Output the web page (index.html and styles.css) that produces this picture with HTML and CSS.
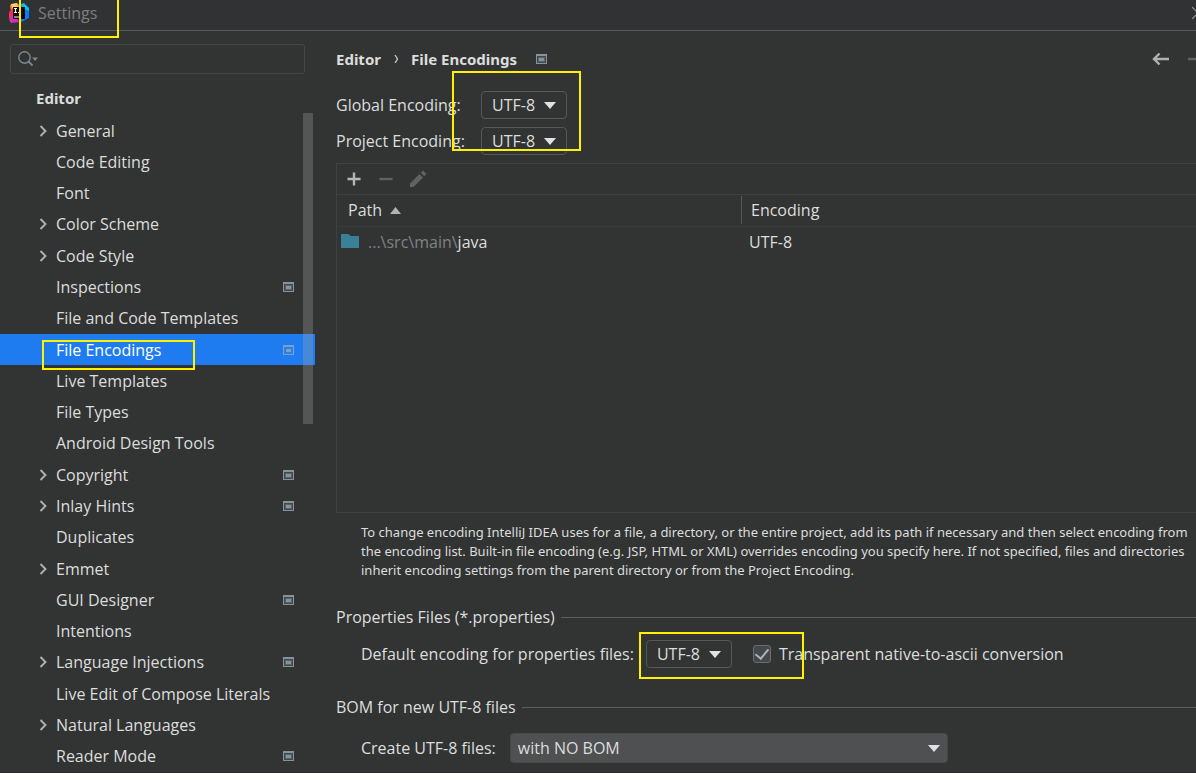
FILE: index.html
```
<!DOCTYPE html>
<html lang="en">
<head>
<meta charset="utf-8">
<title>Settings</title>
<link rel="stylesheet" href="styles.css">
</head>
<body>
<svg class="defs" aria-hidden="true">
  <symbol id="chevron" viewBox="0 0 10 14"><path d="M2.500 2l5 5-5 5" fill="none" stroke="#afb1b3" stroke-width="1.9"/></symbol>
  <symbol id="scope" viewBox="0 0 11 10"><path fill="#87939a" d="M0 0h11v10H0z"/><path fill="#41474a" d="M1 2h9v7H1z"/><path fill="#59626a" d="M2 3h7v5H2z"/><path fill="#87939a" d="M3 4h5v3H3z"/></symbol>
  <symbol id="scope-selected" viewBox="0 0 11 10"><path fill="#7ba0cc" d="M0 0h11v10H0z"/><path fill="#2f7fe0" d="M1 2h9v7H1z"/><path fill="#7ba0cc" d="M3 4h5v3H3z"/></symbol>
  <symbol id="down" viewBox="0 0 12 7"><path fill="#dfe1e5" d="M0 0h12L6 7z"/></symbol>
</svg>
<header class="titlebar">
  <svg class="logo" viewBox="0 0 20 20">
    <path fill="#fc801d" d="M1 2l7-2 5 5-7 13-5 1-1-8 2-2z"/>
    <path fill="#fe2857" d="M0 9l5-4 5 8-4 6-5-1z"/>
    <path fill="#f9d06b" d="M2 1l6-1 1 4-6 1z"/>
    <path fill="#d829c9" d="M1 13l5-2 4 8-8 1z"/>
    <path fill="#087cfa" d="M10 5l5-4 5 5v9l-8 4-2-1z"/>
    <path fill="#07c3f2" d="M12 1l3-1 5 5v3l-7-3z"/>
    <path fill="#120609" d="M4 4h12v12H4z"/>
    <path fill="none" stroke="#fff" stroke-width="1.200" d="M5 5.500h3M6.500 5.500v4M5 9.500h3M9 9.500h1M5 14h5"/>
  </svg>
  <span class="title">Settings</span>
  <button class="close" aria-label="Close"><svg viewBox="0 0 12 12"><path d="M0 0l12 12M12 0L0 12" stroke="#9a9c9e" stroke-width="1.2"/></svg></button>
  <i class="mark mark-title"></i>
</header>
<div class="body">
  <aside class="sidebar">
    <div class="search">
      <svg viewBox="0 0 20 16"><circle cx="6.500" cy="6.500" r="5.700" fill="none" stroke="#7b8791" stroke-width="1.400"/><path d="M10.500 10.500l4 4" stroke="#7b8791" stroke-width="1.800"/><path d="M14 6.500h6l-3 3.500z" fill="#7b8791"/></svg>
      <input type="text" aria-label="Search settings">
    </div>
    <h2 class="group">Editor</h2>
    <ul class="tree">
      <li class="node"><svg class="chev"><use href="#chevron"/></svg><span>General</span></li>
      <li class="node"><span>Code Editing</span></li>
      <li class="node"><span>Font</span></li>
      <li class="node"><svg class="chev"><use href="#chevron"/></svg><span>Color Scheme</span></li>
      <li class="node"><svg class="chev"><use href="#chevron"/></svg><span>Code Style</span></li>
      <li class="node"><span>Inspections</span><svg class="scope"><use href="#scope"/></svg></li>
      <li class="node"><span>File and Code Templates</span></li>
      <li class="node selected"><span>File Encodings</span><svg class="scope"><use href="#scope-selected"/></svg><i class="mark mark-node"></i></li>
      <li class="node"><span>Live Templates</span></li>
      <li class="node"><span>File Types</span></li>
      <li class="node"><span>Android Design Tools</span></li>
      <li class="node"><svg class="chev"><use href="#chevron"/></svg><span>Copyright</span><svg class="scope"><use href="#scope"/></svg></li>
      <li class="node"><svg class="chev"><use href="#chevron"/></svg><span>Inlay Hints</span><svg class="scope"><use href="#scope"/></svg></li>
      <li class="node"><span>Duplicates</span></li>
      <li class="node"><svg class="chev"><use href="#chevron"/></svg><span>Emmet</span></li>
      <li class="node"><span>GUI Designer</span><svg class="scope"><use href="#scope"/></svg></li>
      <li class="node"><span>Intentions</span></li>
      <li class="node"><svg class="chev"><use href="#chevron"/></svg><span>Language Injections</span><svg class="scope"><use href="#scope"/></svg></li>
      <li class="node"><span>Live Edit of Compose Literals</span></li>
      <li class="node"><svg class="chev"><use href="#chevron"/></svg><span>Natural Languages</span></li>
      <li class="node"><span>Reader Mode</span><svg class="scope"><use href="#scope"/></svg></li>
    </ul>
    <div class="scrollbar"></div>
  </aside>
  <main class="main">
    <div class="crumbs">
      <b>Editor</b><svg class="sep" viewBox="0 0 5 8"><path d="M1 0l2.500 4L1 8" fill="none" stroke="#c8cacc" stroke-width="1.300"/></svg><b>File Encodings</b>
      <svg class="scope"><use href="#scope"/></svg>
      <nav class="history">
        <button aria-label="Back"><svg viewBox="0 0 18 14"><path d="M17 7H2M7.500 1.500L2 7l5.500 5.500" fill="none" stroke="#afb1b3" stroke-width="2.400"/></svg></button>
        <button aria-label="Forward"><svg viewBox="0 0 18 14"><path d="M1 7h15M10.500 1.500L16 7l-5.500 5.500" fill="none" stroke="#5f6162" stroke-width="2.400"/></svg></button>
      </nav>
    </div>
    <div class="encodings">
      <label for="global">Global Encoding:</label>
      <div class="combo"><select id="global"><option>UTF-8</option></select><svg><use href="#down"/></svg></div>
      <label for="project">Project Encoding:</label>
      <div class="combo"><select id="project"><option>UTF-8</option></select><svg><use href="#down"/></svg></div>
      <i class="mark mark-encodings"></i>
    </div>
    <section class="paths">
      <div class="toolbar">
        <button aria-label="Add"><svg viewBox="0 0 18 18"><path d="M9 2.500v13M2.500 9h13" stroke="#b4b6b8" stroke-width="2.400"/></svg></button>
        <button aria-label="Remove"><svg viewBox="0 0 18 18"><path d="M2.500 9h13" stroke="#5f6162" stroke-width="2.400"/></svg></button>
        <button aria-label="Edit"><svg viewBox="0 0 18 18"><path d="M1 13.500L10.500 4l3.500 3.500L4.500 17H1zM11.800 2.800L14 .5 17.500 4l-2.300 2.300z" fill="#5f6162"/></svg></button>
      </div>
      <table>
        <thead><tr><th>Path <svg class="sort" viewBox="0 0 11 7"><path d="M0 7h11L5.500 0z" fill="#afb1b3"/></svg></th><th><span class="col">Encoding</span></th></tr></thead>
        <tbody><tr><td><svg class="folder" viewBox="0 0 18 15"><path d="M0 0h7l3 2h8v12H0z" fill="#3b8099"/></svg><span class="dim">...\src\main\</span>java</td><td>UTF-8</td></tr></tbody>
      </table>
    </section>
    <p class="hint">To change encoding IntelliJ IDEA uses for a file, a directory, or the entire project, add its path if necessary and then select encoding from<br>the encoding list. Built-in file encoding (e.g. JSP, HTML or XML) overrides encoding you specify here. If not specified, files and directories<br>inherit encoding settings from the parent directory or from the Project Encoding.</p>
    <h3 class="section">Properties Files (*.properties)</h3>
    <div class="row row-properties">
      <label for="props">Default encoding for properties files:</label>
      <div class="combo"><select id="props"><option>UTF-8</option></select><svg><use href="#down"/></svg><i class="mark mark-props"></i></div>
      <label class="check"><input type="checkbox" checked>Transparent native-to-ascii conversion</label>
    </div>
    <h3 class="section">BOM for new UTF-8 files</h3>
    <div class="row row-bom">
      <label for="bom">Create UTF-8 files:</label>
      <div class="combo wide"><select id="bom"><option>with NO BOM</option></select><svg><use href="#down"/></svg></div>
    </div>
  </main>
</div>
</body>
</html>
```
FILE: styles.css
```
* { box-sizing: border-box; }
body {
  margin: 0;
  min-height: 100vh;
  display: flex;
  flex-direction: column;
  overflow: hidden;
  background: #323433;
  color: #dcdddd;
  font: 16px/20px "Open Sans", "Noto Sans", sans-serif;
  border-bottom: 1px solid #2b292b;
}
button { padding: 0; border: 0; background: none; display: flex; }
h2, h3, p, ul { margin: 0; padding: 0; }
.defs { position: absolute; width: 0; height: 0; }
.mark { position: absolute; border: 2px solid #fff200; pointer-events: none; z-index: 2; }

.titlebar {
  position: relative;
  display: flex;
  align-items: center;
  height: 31px;
  padding: 0 0 4px 9px;
  background: #313234;
  border-bottom: 1px solid #58595a;
}
.logo { width: 20px; height: 20px; }
.title { margin-left: 9px; color: #7d7e7f; }
.close { margin: 0 -8px 0 auto; }
.close svg { width: 12px; height: 12px; }
.mark-title { left: 19px; top: -4px; width: 100px; height: 42px; }

.body { flex: 1; display: flex; }
.sidebar { position: relative; flex: none; width: 315px; display: flex; flex-direction: column; padding-top: 13px; }
.search {
  display: flex;
  align-items: center;
  height: 30px;
  margin: 0 10px;
  padding-left: 7px;
  border: 1px solid #434546;
  border-radius: 3px;
}
.search svg { width: 20px; height: 16px; }
.search input { flex: 1; min-width: 0; border: 0; outline: 0; background: none; color: inherit; font: inherit; }
.group { margin: 14px 0 7px 36px; font: bold 15px/20px "Noto Sans", sans-serif; }
.tree { flex: 1; display: grid; grid-auto-rows: minmax(31px, 1fr); list-style: none; }
.node { position: relative; display: flex; align-items: center; padding: 0 21px 0 56px; }
.chev { width: 10px; height: 14px; margin: 0 8px 0 -18px; }
.scope { width: 11px; height: 10px; }
.node .scope { margin-left: auto; }
.selected { background: #1f7cf0; color: #fff; }
.mark-node { left: 42px; top: 6px; width: 153px; height: 30px; }
.scrollbar { position: absolute; top: 82px; right: 2px; width: 10px; height: 311px; background: #a6a6a64d; }

.main { flex: 1; min-width: 0; display: flex; flex-direction: column; padding: 17px 0 9px 21px; }
.crumbs { display: flex; align-items: center; height: 22px; font: 15px/20px "Noto Sans", sans-serif; }
.sep { width: 5px; height: 8px; margin: 0 12px 0 13px; }
.crumbs .scope { margin-left: 19px; }
.history { display: flex; gap: 17px; margin: 0 -9px 0 auto; }
.history svg { width: 18px; height: 14px; }

.encodings {
  position: relative;
  display: grid;
  grid-template-columns: 145px auto;
  justify-content: start;
  align-items: center;
  row-gap: 8px;
  margin-top: 21px;
}
.mark-encodings { left: 116px; top: -20px; width: 129px; height: 80px; }
.combo { position: relative; width: 86px; }
.combo select {
  appearance: none;
  display: block;
  width: 100%;
  height: 28px;
  padding: 0 10px;
  border: 1px solid #55585a;
  border-radius: 4px;
  background: #323433;
  color: inherit;
  font: inherit;
}
.combo > svg { position: absolute; right: 11px; top: 11px; width: 12px; height: 7px; pointer-events: none; }
.combo.wide { width: 438px; }
.combo.wide select { height: 30px; padding: 0 7px; background: #4e5052; border-color: #464849; }
.combo.wide > svg { right: 8px; top: 12px; }

.paths { flex: 1; margin-top: 8px; border: 1px solid #3e4041; border-right: 0; }
.toolbar { display: flex; align-items: center; gap: 14px; height: 31px; padding-left: 8px; border-bottom: 1px solid #3c3e3f; }
.toolbar svg { width: 18px; height: 18px; }
table { width: 100%; border-collapse: collapse; table-layout: fixed; }
th, td { height: 31px; padding: 0; text-align: left; font-weight: 400; }
th { border-bottom: 1px solid #383a3b; }
th:first-child { width: 404px; padding-left: 11px; }
.col { display: block; padding: 4px 0 4px 9px; border-left: 1px solid #55585a; }
.sort { width: 11px; height: 7px; margin: 0 0 2px 4px; }
td { padding-left: 4px; }
td + td { padding-left: 8px; }
.folder { width: 18px; height: 15px; margin-right: 9px; vertical-align: -1px; }
.dim { color: #808283; }

.hint { margin: 10px 0 0 25px; font: 13px/19px "Noto Sans", sans-serif; white-space: nowrap; }
.section { display: flex; align-items: center; gap: 6px; margin-top: 27px; font-size: 16px; font-weight: 400; line-height: 20px; }
.section::after { content: ""; flex: 1; height: 1px; background: #5c5e5f; }
.row { display: flex; align-items: center; margin: 13px 0 0 25px; }
.row-properties .combo { margin-left: 12px; }
.row-bom { margin-top: 16px; }
.row-bom .combo { margin-left: 14px; }
.row-properties + .section { margin-top: 29px; }
.mark-props { left: -7px; top: -8px; width: 165px; height: 47px; }
.check { display: flex; align-items: center; gap: 8px; margin-left: 21px; }
.check input {
  appearance: none;
  width: 18px;
  height: 18px;
  margin: 0;
  border: 1px solid #6b6d6e;
  border-radius: 3px;
  background: #43494a;
  display: grid;
  place-items: center;
}
.check input:checked::before {
  content: "";
  width: 6px;
  height: 11px;
  margin-bottom: 3px;
  border: solid #afb1b3;
  border-width: 0 2px 2px 0;
  rotate: 40deg;
}
```
